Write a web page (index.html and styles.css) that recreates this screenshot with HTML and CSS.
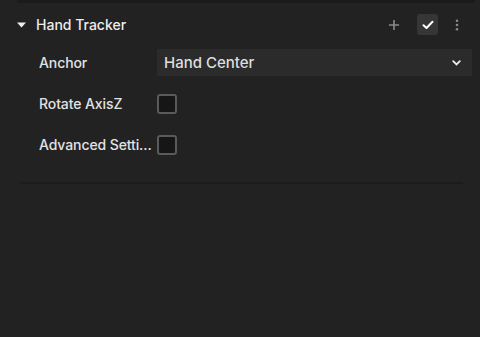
FILE: index.html
```html
<!DOCTYPE html>
<html>
	<head>
		<title>Hand Tracker</title><meta charset="utf-8">
		<link rel="stylesheet" href="styles.css">
	</head>
	<body>
		<div class="panelAnterior"></div>
		<div class="componente">
			<div class="cabecera">
				<svg class="flecha" width="9" height="6" viewBox="0 0 9 6"><path d="M0 0.5 H9 L4.5 5.5 Z" fill="#eeeeee"/></svg>
				<span class="titulo">Hand Tracker</span>
				<div class="iconos">
					<svg class="icono" width="12" height="12" viewBox="0 0 12 12"><path d="M6 1 V11 M1 6 H11" stroke="#8a8a8a" stroke-width="1.6"/></svg>
					<div class="botonCheck">
						<svg width="12" height="10" viewBox="0 0 12 10"><path d="M1.5 5.2 L4.5 8 L10.5 1.8" stroke="#ffffff" stroke-width="2" fill="none" stroke-linecap="round" stroke-linejoin="round"/></svg>
					</div>
					<svg class="icono" width="4" height="12" viewBox="0 0 4 12"><circle cx="2" cy="1.7" r="1.3" fill="#8a8a8a"/><circle cx="2" cy="6" r="1.3" fill="#8a8a8a"/><circle cx="2" cy="10.3" r="1.3" fill="#8a8a8a"/></svg>
				</div>
			</div>
			<div class="filas">
				<div class="fila">
					<span class="etiqueta">Anchor</span>
					<div class="desplegable">
						<span>Hand Center</span>
						<svg width="9" height="6" viewBox="0 0 9 6"><path d="M1.2 1.2 L4.5 4.5 L7.8 1.2" stroke="#eeeeee" stroke-width="1.8" fill="none" stroke-linecap="round"/></svg>
					</div>
				</div>
				<div class="fila">
					<span class="etiqueta">Rotate AxisZ</span>
					<div class="casilla"></div>
				</div>
				<div class="fila">
					<span class="etiqueta" title="Advanced Settings">Advanced Setti...</span>
					<div class="casilla"></div>
				</div>
			</div>
			<div class="separador"></div>
		</div>
	</body>
</html>
```
FILE: styles.css
```css
/* Panel de componente Hand Tracker */

body {margin: 0; background-color: #222222; font-family: Inter, "Noto Sans", sans-serif; color: #e6e6e6; height: 337px; overflow: hidden;}
.panelAnterior {height: 3px; margin-left: 17px; margin-right: 5px; background-color: #1b1b1b; border-radius: 0 0 4px 4px;}
.cabecera {display: flex; align-items: center; height: 41px; margin-top: 1px; padding-left: 17px; padding-right: 21px;}
.flecha {margin-right: 10px;}
.titulo {font-size: 14px; font-weight: 500; color: #ececec;}
.iconos {margin-left: auto; display: flex; align-items: center;}
.icono {display: block;}
.botonCheck {width: 21px; height: 21px; background-color: #363636; border-radius: 3px; display: flex; align-items: center; justify-content: center; margin: 0 17px 0 17px;}
.filas {display: flex; flex-direction: column; gap: 14px; margin-top: 4px; padding-left: 39px; padding-right: 8px;}
.fila {display: flex; align-items: center; height: 27px;}
.etiqueta {width: 118px; flex: none; font-size: 14px; font-weight: 500; color: #e2e2e2; white-space: nowrap; letter-spacing: -0.1px;}
.desplegable {flex: 1; height: 27px; background-color: #2b2b2b; display: flex; align-items: center; justify-content: space-between; padding: 0 11px 0 7px; font-size: 15px; font-weight: 500; color: #dedede;}
.casilla {width: 16px; height: 16px; border: 2px solid #5a5a5a; border-radius: 3px; background-color: #161616;}
.separador {height: 2px; background-color: #1c1c1c; margin: 24px 17px 0 20px;}
```
